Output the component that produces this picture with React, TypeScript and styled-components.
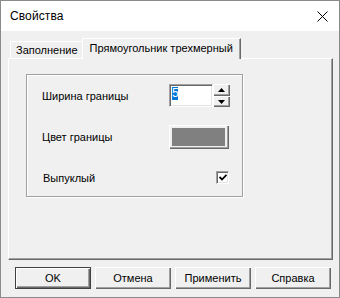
import React from "react";
import styled, { createGlobalStyle } from "styled-components";

const Global = createGlobalStyle`
  html, body { margin: 0; padding: 0; background: #f0f0f0; }
  * { box-sizing: border-box; }
  body { font-family: "Liberation Sans", Arial, sans-serif; font-size: 11px; color: #000; }
`;

const Window = styled.div`
  width: 340px;
  height: 298px;
  border: 1px solid #8a8a8a;
  background: #f0f0f0;
  display: flex;
  flex-direction: column;
  overflow: hidden;
`;

const TitleBar = styled.div`
  height: 30px;
  flex: none;
  background: #fff;
  display: flex;
  align-items: center;
  justify-content: space-between;
  padding: 0 11px 0 9px;
  font-size: 12px;
`;

const Title = styled.span`
  font-size: 12px;
  letter-spacing: 0.1px;
`;

const CloseBtn = styled.span`
  display: flex;
  width: 12px;
  height: 12px;
  align-items: center;
  justify-content: center;
`;

const Body = styled.div`
  flex: 1;
  display: flex;
  flex-direction: column;
  padding: 7px 6px 0 7px;
`;

const TabStrip = styled.div`
  height: 20px;
  display: flex;
  align-items: flex-end;
  padding-left: 2px;
`;

const Tab = styled.div<{ $active?: boolean }>`
  position: relative;
  z-index: ${(p) => (p.$active ? 1 : 0)};
  height: ${(p) => (p.$active ? 21 : 17)}px;
  margin-left: ${(p) => (p.$active ? -2 : 0)}px;
  margin-bottom: ${(p) => (p.$active ? -1 : 0)}px;
  padding: ${(p) => (p.$active ? "0 7px 2px 7px" : "0 5px 0 5px")};
  display: flex;
  align-items: center;
  background: #f0f0f0;
  border-top: 1px solid #fff;
  border-left: 1px solid #fff;
  border-right: 1px solid #696969;
  box-shadow: inset -1px 0 0 #a0a0a0;
  white-space: nowrap;
  font-size: 11px;
`;

const Panel = styled.div`
  height: 202px;
  border-top: 1px solid #fff;
  border-left: 1px solid #fff;
  border-right: 1px solid #696969;
  border-bottom: 1px solid #696969;
  box-shadow: inset -1px -1px 0 #a0a0a0;
  padding: 15px 0 0 17px;
`;

const Group = styled.div`
  width: 217px;
  height: 123px;
  border: 1px solid #a0a0a0;
  box-shadow: 1px 1px 0 #fff, inset 1px 1px 0 #fff;
  display: grid;
  grid-template-columns: 127px 61px;
  grid-auto-rows: 23px;
  row-gap: 18px;
  padding: 9px 0 0 15px;
`;

const Label = styled.div`
  display: flex;
  align-items: center;
  font-size: 11px;
  padding-left: ${(p: { $indent?: number }) => p.$indent ?? 0}px;
`;

const Spin = styled.div`
  display: flex;
  height: 23px;
`;

const Edit = styled.div`
  width: 44px;
  height: 23px;
  background: #fff;
  border-top: 1px solid #a0a0a0;
  border-left: 1px solid #a0a0a0;
  border-right: 1px solid #fff;
  border-bottom: 1px solid #fff;
  box-shadow: inset 1px 1px 0 #696969, inset -1px -1px 0 #e3e3e3;
  padding: 2px 0 0 2px;
  display: flex;
  align-items: flex-start;
`;

const Selected = styled.span`
  display: inline-block;
  height: 13px;
  line-height: 13px;
  padding: 0 0 0 0;
  width: 6px;
  background: #0078d7;
  color: #fff;
  font-size: 12px;
`;

const SpinCol = styled.div`
  width: 17px;
  display: flex;
  flex-direction: column;
`;

const SpinBtn = styled.div<{ $h: number }>`
  height: ${(p) => p.$h}px;
  background: #f0f0f0;
  box-shadow: inset 1px 1px 0 #fff, inset -1px -1px 0 #696969, inset -2px -2px 0 #a0a0a0;
  display: flex;
  align-items: center;
  justify-content: center;
`;

const ColorButton = styled.div`
  width: 60px;
  height: 24px;
  padding: 3px 4px 3px 3px;
  background: #f0f0f0;
  box-shadow: inset 1px 1px 0 #fff, inset -1px -1px 0 #696969, inset -2px -2px 0 #a0a0a0;
  display: flex;
`;

const Swatch = styled.div<{ $color: string }>`
  flex: 1;
  background: ${(p) => p.$color};
`;

const CheckCell = styled.div`
  display: flex;
  align-items: center;
  justify-content: flex-end;
  padding-right: 1px;
`;

const CheckBox = styled.div`
  width: 13px;
  height: 13px;
  background: #fff;
  border-top: 1px solid #a0a0a0;
  border-left: 1px solid #a0a0a0;
  border-right: 1px solid #fff;
  border-bottom: 1px solid #fff;
  box-shadow: inset 1px 1px 0 #696969, inset -1px -1px 0 #e3e3e3;
  display: flex;
  align-items: center;
  justify-content: center;
`;

const ButtonRow = styled.div`
  display: flex;
  gap: 4px;
  padding: 7px 0 0 7px;
`;

const Button = styled.div<{ $default?: boolean }>`
  width: 76px;
  height: 22px;
  display: flex;
  align-items: center;
  justify-content: center;
  font-size: 11px;
  background: #f0f0f0;
  box-shadow: ${(p) =>
    p.$default
      ? "inset 0 0 0 1px #404040, inset 2px 2px 0 #fff, inset -2px -2px 0 #696969, inset -3px -3px 0 #a0a0a0"
      : "inset 1px 1px 0 #fff, inset -1px -1px 0 #696969, inset -2px -2px 0 #a0a0a0"};
`;

const Arrow = ({ up }: { up?: boolean }) => (
  <svg width="7" height="4" viewBox="0 0 7 4">
    <path d={up ? "M0 4 L3.5 0 L7 4 Z" : "M0 0 L3.5 4 L7 0 Z"} fill="#000" />
  </svg>
);

export default function App() {
  return (
    <>
      <Global />
      <Window>
        <TitleBar>
          <Title>Свойства</Title>
          <CloseBtn>
            <svg width="11" height="11" viewBox="0 0 11 11">
              <path d="M0.5 0.5 L10.5 10.5 M10.5 0.5 L0.5 10.5" stroke="#000" strokeWidth="1" />
            </svg>
          </CloseBtn>
        </TitleBar>
        <Body>
          <TabStrip>
            <Tab>Заполнение</Tab>
            <Tab $active>Прямоугольник трехмерный</Tab>
          </TabStrip>
          <Panel>
            <Group>
              <Label>Ширина границы</Label>
              <Spin>
                <Edit>
                  <Selected>5</Selected>
                </Edit>
                <SpinCol>
                  <SpinBtn $h={12}>
                    <Arrow up />
                  </SpinBtn>
                  <SpinBtn $h={11}>
                    <Arrow />
                  </SpinBtn>
                </SpinCol>
              </Spin>
              <Label>Цвет границы</Label>
              <ColorButton>
                <Swatch $color="#808080" />
              </ColorButton>
              <Label $indent={1}>Выпуклый</Label>
              <CheckCell>
                <CheckBox>
                  <svg width="8" height="7" viewBox="0 0 8 7">
                    <path d="M0.5 3 L3 5.5 L7.5 0.8" stroke="#000" strokeWidth="1.8" fill="none" />
                  </svg>
                </CheckBox>
              </CheckCell>
            </Group>
          </Panel>
          <ButtonRow>
            <Button $default>OK</Button>
            <Button>Отмена</Button>
            <Button>Применить</Button>
            <Button>Справка</Button>
          </ButtonRow>
        </Body>
      </Window>
    </>
  );
}
